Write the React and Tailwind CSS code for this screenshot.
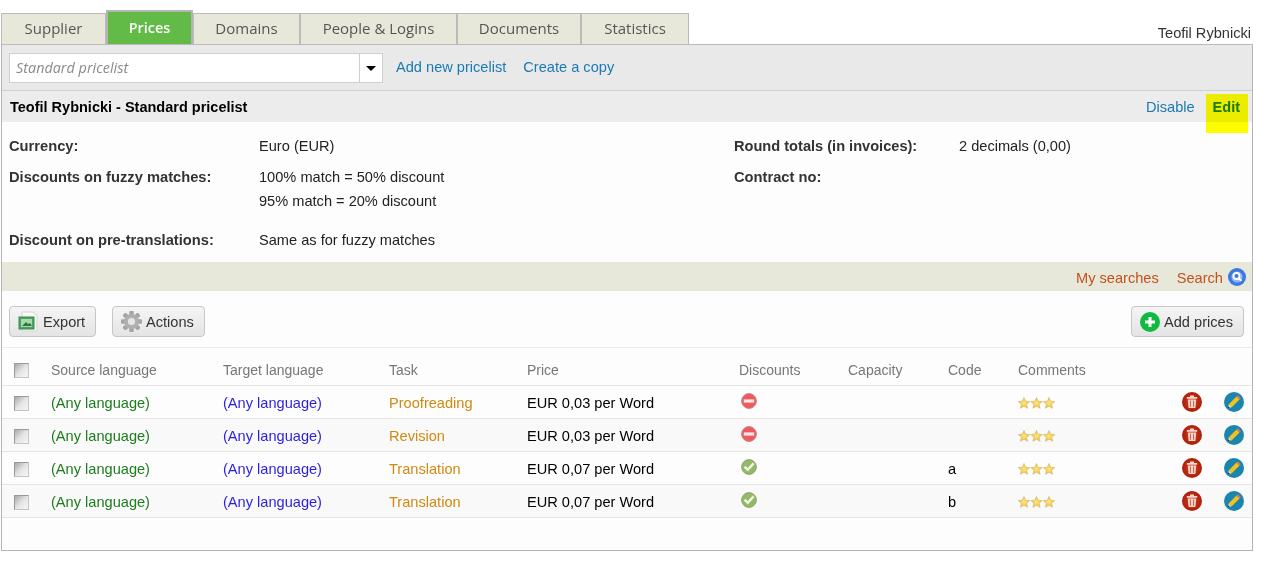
import React from "react";

const tabs = [
  { label: "Supplier", w: "w-[105px]" },
  { label: "Prices", w: "w-[87px]", active: true },
  { label: "Domains", w: "w-[107px]" },
  { label: "People & Logins", w: "w-[157px]" },
  { label: "Documents", w: "w-[124px]" },
  { label: "Statistics", w: "w-[108px]" },
];

const rows = [
  { task: "Proofreading", price: "EUR 0,03 per Word", ok: false, code: "" },
  { task: "Revision", price: "EUR 0,03 per Word", ok: false, code: "" },
  { task: "Translation", price: "EUR 0,07 per Word", ok: true, code: "a" },
  { task: "Translation", price: "EUR 0,07 per Word", ok: true, code: "b" },
];

const Checkbox = () => (
  <span className="block w-[15px] h-[15px] border border-[#9a9a9a] border-r-[#c4c4c4] border-b-[#c4c4c4] bg-gradient-to-br from-[#a9a9a9] via-[#e4e4e4] to-[#f7f7f7]" />
);

const Stars = () => (
  <svg width="37" height="12" viewBox="0 0 37 12">
    <defs>
      <radialGradient id="starFill">
        <stop offset="0%" stopColor="#ffe680" />
        <stop offset="100%" stopColor="#f0c030" />
      </radialGradient>
    </defs>
    {[0, 12.5, 25].map((x) => (
      <polygon
        key={x}
        transform={`translate(${x} 0)`}
        points="6,0.5 7.6,4.2 11.8,4.6 8.6,7.3 9.6,11.3 6,9.2 2.4,11.3 3.4,7.3 0.2,4.6 4.4,4.2"
        fill="url(#starFill)"
        stroke="#cdb677"
        strokeWidth="0.6"
      />
    ))}
  </svg>
);

const NoIcon = () => (
  <svg width="16" height="16" viewBox="0 0 16 16">
    <circle cx="8" cy="8" r="7.4" fill="#ee5b5f" stroke="#cf8083" />
    <rect x="2.8" y="6.4" width="10.4" height="3.2" fill="#fbeaea" />
  </svg>
);

const OkIcon = () => (
  <svg width="16" height="16" viewBox="0 0 16 16">
    <circle cx="8" cy="8" r="7.4" fill="#93b964" stroke="#8fa67a" />
    <path d="M3.6 7.6l3.2 3.2 5.8-6.4" fill="none" stroke="#f2f7e8" strokeWidth="2.4" />
  </svg>
);

const TrashIcon = () => (
  <svg width="20" height="20" viewBox="0 0 20 20">
    <defs>
      <radialGradient id="trashFill">
        <stop offset="0%" stopColor="#d93a1c" />
        <stop offset="100%" stopColor="#ab1f0a" />
      </radialGradient>
    </defs>
    <circle cx="10" cy="10" r="10" fill="url(#trashFill)" />
    <path d="M4.8 5h10.4v1.8H4.8zM8 5V3.4h4V5" fill="#f5d9cf" />
    <path d="M5.8 7.4h8.4l-.8 8.6H6.6z" fill="#f5d9cf" />
    <path d="M8.4 8.6v6.2M11.6 8.6v6.2" stroke="#c9492f" strokeWidth="0.9" />
  </svg>
);

const PencilIcon = () => (
  <svg width="20" height="20" viewBox="0 0 20 20">
    <circle cx="10" cy="10" r="10" fill="#1a86ad" />
    <path d="M4.8 12.2L12.5 4.5l3 3L7.8 15.2z" fill="#f3c21f" />
    <path d="M12.5 4.5l1.3-1.2 3 3-1.3 1.2z" fill="#e8735c" />
    <path d="M4.8 12.2L3.8 16.2l4-1z" fill="#e9d9b0" />
    <path d="M4.3 14.2L3.8 16.2l2-.5z" fill="#22303a" />
  </svg>
);

const ExcelIcon = () => (
  <svg width="21" height="22" viewBox="0 0 21 22">
    <path d="M4 1h11l4 4v15H4z" fill="#f8f8f4" stroke="#d4d7ce" />
    <rect x="1" y="6" width="15" height="12" fill="#4aa362" stroke="#3a8a4e" />
    <path d="M3 8h11v8H3z" fill="#a9d9ac" />
    <path d="M4 15l4-4 2 2 2-1 2 3z" fill="#2d7a40" />
  </svg>
);

const GearIcon = () => (
  <svg width="21" height="21" viewBox="0 0 21 21">
    <g fill="#a4a6a4">
      {[0, 45, 90, 135, 180, 225, 270, 315].map((a) => (
        <rect key={a} x="8.5" y="0" width="4" height="21" rx="1" transform={`rotate(${a} 10.5 10.5)`} />
      ))}
    </g>
    <circle cx="10.5" cy="10.5" r="7.4" fill="#afb1af" />
    <circle cx="10.5" cy="10.5" r="3.6" fill="#e6e6e6" />
  </svg>
);

const PlusIcon = () => (
  <svg width="20" height="20" viewBox="0 0 20 20">
    <circle cx="10" cy="10" r="10" fill="#0fba3d" />
    <path d="M10 5v10M5 10h10" stroke="#fff" strokeWidth="3" />
  </svg>
);

const SearchIcon = () => (
  <svg width="18" height="18" viewBox="0 0 18 18">
    <circle cx="9" cy="9" r="9" fill="#3b78e0" />
    <circle cx="9" cy="9" r="5.6" fill="#8fb4f2" />
    <circle cx="8.5" cy="8" r="3" fill="#3b78e0" stroke="#fff" strokeWidth="1.8" />
    <path d="M10.8 10.3l2.6 2.6" stroke="#fff" strokeWidth="2" />
  </svg>
);

const ToolButton = ({ icon, label, className }) => (
  <button className={`h-[31px] flex items-center gap-[4px] rounded border border-[#c6c6c6] bg-gradient-to-b from-[#f5f5f5] to-[#e4e4e4] text-[#333] ${className}`}>
    {icon}
    <span className="pt-[3px]">{label}</span>
  </button>
);

const gridCols = "grid grid-cols-[49px_172px_166px_138px_212px_109px_100px_70px_164px_42px_30px] items-center";

export default function App() {
  return (
    <div className="w-[1279px] h-[575px] bg-white relative font-['Liberation_Sans',Arial,sans-serif] text-[14.6px] text-black overflow-hidden">
      {/* tabs + user name */}
      <div className="h-[44px] pl-px flex items-end relative">
        {tabs.map((t) => (
          <div
            key={t.label}
            className={`${t.w} flex items-center justify-center border border-b-0 font-['Open_Sans',sans-serif] ${
              t.active
                ? "h-[34px] bg-[#63bb47] border-[#b5b5b5] border-2 text-white font-semibold text-[14.4px]"
                : "h-[31px] pb-[2px] bg-[#e8e8da] border-[#bbbbbb] text-[#555] text-[15px]"
            }`}
          >
            {t.label}
          </div>
        ))}
        <span className="ml-auto mr-[28px] -mb-px text-[#333]">Teofil Rybnicki</span>
      </div>

      {/* main panel */}
      <div className="ml-px w-[1252px] h-[507px] border border-t-[#bbb] border-[#b4b4b4] flex flex-col">
        <div className="h-[46px] shrink-0 bg-[#e9e9e9] border-b border-[#cfcfcf] flex items-center pl-[7px] pt-px">
          <div className="w-[374px] h-[30px] bg-white border border-[#cfcfcf] flex items-center">
            <span className="flex-1 pl-[6px] font-['Open_Sans',sans-serif] italic text-[14.4px] text-[#8a8a8a]">Standard pricelist</span>
            <span className="w-[23px] h-full border-l border-[#cfcfcf] flex items-center justify-center">
              <span className="w-0 h-0 border-l-[5px] border-r-[5px] border-t-[5px] border-l-transparent border-r-transparent border-t-black" />
            </span>
          </div>
          <a className="ml-[13px] text-[#1a7ab5]">Add new pricelist</a>
          <a className="ml-[17px] text-[#1a7ab5]">Create a copy</a>
        </div>

        <div className="h-[31px] shrink-0 bg-[#ececec] flex items-center pl-2 pr-[12px] pt-[2px]">
          <span className="font-bold text-[14.5px]">Teofil Rybnicki - Standard pricelist</span>
          <a className="ml-auto text-[#1a7ab5]">Disable</a>
          <a className="ml-[18px] font-bold text-[14.5px] text-[#1a7ab5]">Edit</a>
        </div>

        <div className="h-[140px] shrink-0 bg-[#fdfdfd] flex text-[#222] pl-[7px] leading-[24px]">
          <div className="w-[725px] pt-[12px]">
            <div className="flex h-[24px]">
              <b className="w-[250px] text-[14.7px] text-[#333]">Currency:</b>
              <span>Euro (EUR)</span>
            </div>
            <div className="flex mt-[7px] h-[48px]">
              <b className="w-[250px] text-[14.7px] text-[#333]">Discounts on fuzzy matches:</b>
              <div>
                <div>100% match = 50% discount</div>
                <div>95% match = 20% discount</div>
              </div>
            </div>
            <div className="flex mt-[15px] h-[24px]">
              <b className="w-[250px] text-[14.7px] text-[#333]">Discount on pre-translations:</b>
              <span>Same as for fuzzy matches</span>
            </div>
          </div>
          <div className="pt-[12px]">
            <div className="flex h-[24px]">
              <b className="w-[225px] text-[14.6px] text-[#333]">Round totals (in invoices):</b>
              <span>2 decimals (0,00)</span>
            </div>
            <div className="flex mt-[7px]">
              <b className="text-[14.7px] text-[#333]">Contract no:</b>
            </div>
          </div>
        </div>

        <div className="h-[29px] shrink-0 bg-[#e8e8da] flex items-center justify-end pr-[6px] text-[#c2511c]">
          <a className="pt-[5px]">My searches</a>
          <a className="ml-[18px] mr-[5px] pt-[5px]">Search</a>
          <SearchIcon />
        </div>

        <div className="h-[57px] shrink-0 bg-[#fdfdfd] border-b border-[#ececec] flex items-center pl-[7px] pr-2 pt-[5px]">
          <ToolButton icon={<ExcelIcon />} label="Export" className="w-[87px] pl-[8px]" />
          <ToolButton icon={<GearIcon />} label="Actions" className="w-[93px] pl-[8px] ml-[16px]" />
          <ToolButton icon={<PlusIcon />} label="Add prices" className="w-[113px] pl-[8px] ml-auto" />
        </div>

        <div className={`${gridCols} h-[38px] shrink-0 bg-[#fdfdfd] border-b border-[#e6e6e6] text-[#777] text-[14px]`}>
          <div className="pl-3 pt-[7px]"><Checkbox /></div>
          <div className="pt-[7px]">Source language</div>
          <div className="pt-[7px]">Target language</div>
          <div className="pt-[7px]">Task</div>
          <div className="pt-[7px]">Price</div>
          <div className="pt-[7px]">Discounts</div>
          <div className="pt-[7px]">Capacity</div>
          <div className="pt-[7px]">Code</div>
          <div className="pt-[7px]">Comments</div>
        </div>

        {rows.map((r, i) => (
          <div
            key={i}
            className={`${gridCols} h-[33px] shrink-0 border-b border-[#e6e6e6] ${i % 2 ? "bg-[#f9f9f9]" : "bg-[#fdfdfd]"}`}
          >
            <div className="pl-3 pt-[2px]"><Checkbox /></div>
            <div className="pt-[4px] text-[#1c7d1c]">(Any language)</div>
            <div className="pt-[4px] text-[#2a1fe0]">(Any language)</div>
            <div className="pt-[4px] text-[#cf8a10]">{r.task}</div>
            <div className="pt-[4px]">{r.price}</div>
            <div className="pl-[2px] pb-[3px]">{r.ok ? <OkIcon /> : <NoIcon />}</div>
            <div />
            <div className="pt-[4px]">{r.code}</div>
            <div className="pt-[2px]"><Stars /></div>
            <div className="pb-px"><TrashIcon /></div>
            <div className="pb-px"><PencilIcon /></div>
          </div>
        ))}
        <div className="flex-1 bg-[#fdfdfd]" />
      </div>

      {/* yellow marker over the Edit link */}
      <div className="absolute left-[1206px] top-[94px] w-[42px] h-[39px] bg-[#ffff00] mix-blend-multiply" />
    </div>
  );
}
